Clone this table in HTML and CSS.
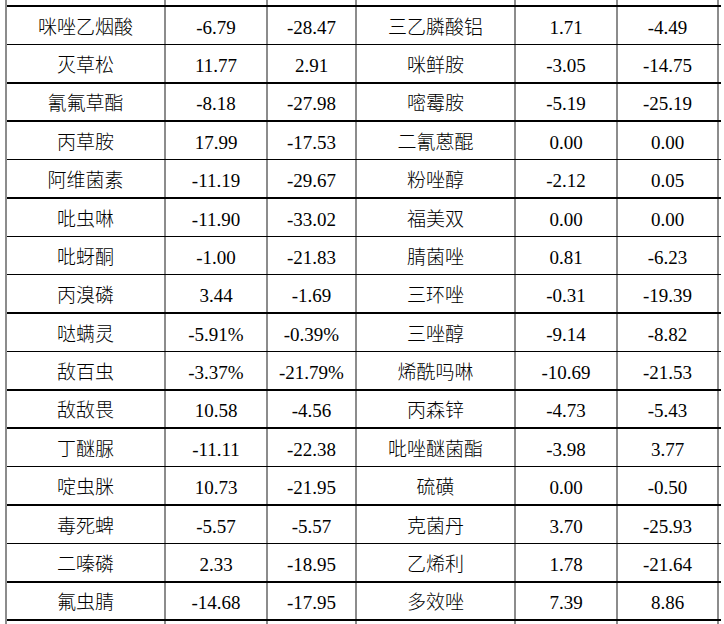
FILE: index.html
```html
<!DOCTYPE html>
<html lang="zh">
<head>
<meta charset="utf-8">
<title>农药数据表</title>
<link rel="stylesheet" href="styles.css">
</head>
<body>
<div class="table">
  <div class="row cap-top"><div class="cell"></div><div class="cell"></div><div class="cell"></div><div class="cell"></div><div class="cell"></div><div class="cell"></div></div>
  <div class="row thick h39"><div class="cell">咪唑乙烟酸</div><div class="cell">-6.79</div><div class="cell">-28.47</div><div class="cell">三乙膦酸铝</div><div class="cell">1.71</div><div class="cell">-4.49</div></div>
  <div class="row thin h38"><div class="cell">灭草松</div><div class="cell">11.77</div><div class="cell">2.91</div><div class="cell">咪鲜胺</div><div class="cell">-3.05</div><div class="cell">-14.75</div></div>
  <div class="row thick h38"><div class="cell">氰氟草酯</div><div class="cell">-8.18</div><div class="cell">-27.98</div><div class="cell">嘧霉胺</div><div class="cell">-5.19</div><div class="cell">-25.19</div></div>
  <div class="row thick h39"><div class="cell">丙草胺</div><div class="cell">17.99</div><div class="cell">-17.53</div><div class="cell">二氰蒽醌</div><div class="cell">0.00</div><div class="cell">0.00</div></div>
  <div class="row thin h38"><div class="cell">阿维菌素</div><div class="cell">-11.19</div><div class="cell">-29.67</div><div class="cell">粉唑醇</div><div class="cell">-2.12</div><div class="cell">0.05</div></div>
  <div class="row thick h39"><div class="cell">吡虫啉</div><div class="cell">-11.90</div><div class="cell">-33.02</div><div class="cell">福美双</div><div class="cell">0.00</div><div class="cell">0.00</div></div>
  <div class="row thin h38"><div class="cell">吡蚜酮</div><div class="cell">-1.00</div><div class="cell">-21.83</div><div class="cell">腈菌唑</div><div class="cell">0.81</div><div class="cell">-6.23</div></div>
  <div class="row thin h38"><div class="cell">丙溴磷</div><div class="cell">3.44</div><div class="cell">-1.69</div><div class="cell">三环唑</div><div class="cell">-0.31</div><div class="cell">-19.39</div></div>
  <div class="row thick h39"><div class="cell">哒螨灵</div><div class="cell">-5.91%</div><div class="cell">-0.39%</div><div class="cell">三唑醇</div><div class="cell">-9.14</div><div class="cell">-8.82</div></div>
  <div class="row thin h38"><div class="cell">敌百虫</div><div class="cell">-3.37%</div><div class="cell">-21.79%</div><div class="cell">烯酰吗啉</div><div class="cell">-10.69</div><div class="cell">-21.53</div></div>
  <div class="row thick h38"><div class="cell">敌敌畏</div><div class="cell">10.58</div><div class="cell">-4.56</div><div class="cell">丙森锌</div><div class="cell">-4.73</div><div class="cell">-5.43</div></div>
  <div class="row thick h39"><div class="cell">丁醚脲</div><div class="cell">-11.11</div><div class="cell">-22.38</div><div class="cell">吡唑醚菌酯</div><div class="cell">-3.98</div><div class="cell">3.77</div></div>
  <div class="row thin h38"><div class="cell">啶虫脒</div><div class="cell">10.73</div><div class="cell">-21.95</div><div class="cell">硫磺</div><div class="cell">0.00</div><div class="cell">-0.50</div></div>
  <div class="row thick h39"><div class="cell">毒死蜱</div><div class="cell">-5.57</div><div class="cell">-5.57</div><div class="cell">克菌丹</div><div class="cell">3.70</div><div class="cell">-25.93</div></div>
  <div class="row thin h38"><div class="cell">二嗪磷</div><div class="cell">2.33</div><div class="cell">-18.95</div><div class="cell">乙烯利</div><div class="cell">1.78</div><div class="cell">-21.64</div></div>
  <div class="row thick h38"><div class="cell">氟虫腈</div><div class="cell">-14.68</div><div class="cell">-17.95</div><div class="cell">多效唑</div><div class="cell">7.39</div><div class="cell">8.86</div></div>
  <div class="row thick cap-bottom"><div class="cell"></div><div class="cell"></div><div class="cell"></div><div class="cell"></div><div class="cell"></div><div class="cell"></div></div>
</div>
</body>
</html>
```

FILE: styles.css
```css
html, body {
  margin: 0;
  padding: 0;
  background: #ffffff;
  overflow: hidden;
}

.table {
  margin-left: 5px;
  width: 714px;
  border-left: 2px solid #8c8c8c;
  font-family: "Liberation Serif", "Noto Sans CJK SC", serif;
  font-size: 19px;
  font-weight: 300;
  color: #000000;
}

.row {
  display: grid;
  grid-template-columns: 159px 102px 89px 159px 102px 101px;
  box-sizing: border-box;
  border-top: 0 solid #000000;
}

.row.thick { border-top-width: 2px; }
.row.thin { border-top-width: 1px; }

.h38 { height: 38px; }
.h39 { height: 39px; }

.cap-top { height: 5px; }
.cap-bottom { height: 10px; }

.cell {
  box-sizing: border-box;
  border-right: 2px solid #8c8c8c;
  display: flex;
  align-items: center;
  justify-content: center;
  padding-top: 3px;
  line-height: 1;
  white-space: nowrap;
}
```
